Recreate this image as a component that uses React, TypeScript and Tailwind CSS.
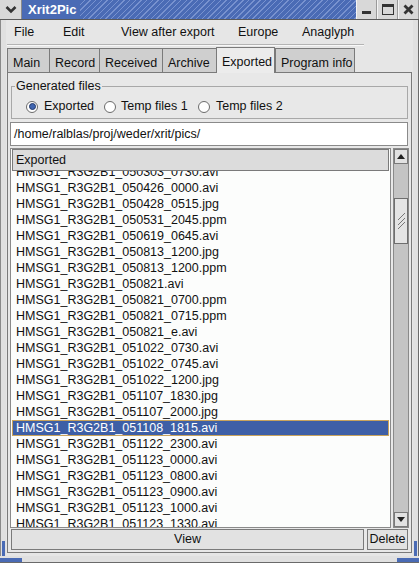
import React from "react";

const files = [
  "HMSG1_R3G2B1_050303_0730.avi",
  "HMSG1_R3G2B1_050426_0000.avi",
  "HMSG1_R3G2B1_050428_0515.jpg",
  "HMSG1_R3G2B1_050531_2045.ppm",
  "HMSG1_R3G2B1_050619_0645.avi",
  "HMSG1_R3G2B1_050813_1200.jpg",
  "HMSG1_R3G2B1_050813_1200.ppm",
  "HMSG1_R3G2B1_050821.avi",
  "HMSG1_R3G2B1_050821_0700.ppm",
  "HMSG1_R3G2B1_050821_0715.ppm",
  "HMSG1_R3G2B1_050821_e.avi",
  "HMSG1_R3G2B1_051022_0730.avi",
  "HMSG1_R3G2B1_051022_0745.avi",
  "HMSG1_R3G2B1_051022_1200.jpg",
  "HMSG1_R3G2B1_051107_1830.jpg",
  "HMSG1_R3G2B1_051107_2000.jpg",
  "HMSG1_R3G2B1_051108_1815.avi",
  "HMSG1_R3G2B1_051122_2300.avi",
  "HMSG1_R3G2B1_051123_0000.avi",
  "HMSG1_R3G2B1_051123_0800.avi",
  "HMSG1_R3G2B1_051123_0900.avi",
  "HMSG1_R3G2B1_051123_1000.avi",
  "HMSG1_R3G2B1_051123_1330.avi",
];
const SELECTED = 16;

const tabs = [
  { label: "Main", w: "w-[42px]" },
  { label: "Record", w: "w-[50px]" },
  { label: "Received", w: "w-[63px]" },
  { label: "Archive", w: "w-[54px]" },
  { label: "Exported", w: "w-[59px]", active: true },
  { label: "Program info", w: "w-[80px]" },
];

const Radio = ({ checked }: { checked?: boolean }) => (
  <span className="flex h-[12px] w-[12px] shrink-0 items-center justify-center rounded-full border border-[#6b6b6b] bg-white">
    {checked && <span className="h-[7px] w-[7px] rounded-full border border-[#22386b] bg-[#4065b0]" />}
  </span>
);

const TitleButton = ({ children }: { children: React.ReactNode }) => (
  <div className="flex h-full w-[21px] items-center justify-center border-l border-[#f4f4f4] border-r border-r-[#9a9a9a] bg-[#d8d8d8]">
    {children}
  </div>
);

export default function App() {
  return (
    <div className="flex h-[563px] w-[419px] flex-col overflow-hidden bg-[#e6e6e6] font-['Liberation_Sans',Arial,sans-serif] text-[12.5px] text-[#111]">
      {/* title bar */}
      <div className="flex h-[20px] shrink-0 items-stretch border-b border-[#5a5a5a]">
        <div className="flex w-[22px] items-center justify-center border-r border-[#8a8a8a] bg-[#d8d8d8]">
          <svg width="12" height="9" viewBox="0 0 12 9">
            <path d="M1.5 2 L6 6.5 L10.5 2" fill="none" stroke="#333" strokeWidth="2.6" />
          </svg>
        </div>
        <div className="flex flex-1 items-center bg-[#4a6bb5]">
          <span className="pl-[6px] pr-[4px] text-[13px] font-bold text-white">Xrit2Pic</span>
          <div className="h-full flex-1 bg-[repeating-linear-gradient(135deg,#4a6bb5_0px,#4a6bb5_3px,#7892cf_3px,#7892cf_4px)]" />
        </div>
        <TitleButton>
          <span className="mt-[6px] h-[3px] w-[9px] bg-[#333]" />
        </TitleButton>
        <TitleButton>
          <span className="h-[11px] w-[12px] border border-[#333] border-t-[3px]" />
        </TitleButton>
        <TitleButton>
          <svg width="11" height="11" viewBox="0 0 11 11">
            <path d="M1.5 1.5 L9.5 9.5 M9.5 1.5 L1.5 9.5" stroke="#333" strokeWidth="2.8" />
          </svg>
        </TitleButton>
      </div>

      <div className="flex min-h-0 flex-1">
        {/* left frame */}
        <div className="flex w-[6px] flex-col border-l border-[#8a8a8a] bg-[#e0e0e0]">
          <div className="flex-1" />
          <div className="ml-[1px] h-[15px] w-[3px] bg-[#4a6bb5]" />
        </div>

        {/* content */}
        <div className="flex min-h-0 flex-1 flex-col">
          {/* menu bar */}
          <div className="flex h-[24px] shrink-0 items-center pl-[8px]">
            <span className="w-[49px]">File</span>
            <span className="w-[58px]">Edit</span>
            <span className="w-[117px]">View after export</span>
            <span className="w-[64px]">Europe</span>
            <span>Anaglyph</span>
          </div>
          <div className="ml-[1px] h-[2px] w-[357px] shrink-0 border-t border-[#b4b4b4] border-b border-b-[#f8f8f8]" />

          {/* tabs */}
          <div className="ml-[1px] mt-[1px] flex h-[25px] shrink-0 items-end">
            {tabs.map((t, i) =>
              t.active ? (
                <div
                  key={t.label}
                  className={`relative z-10 -mb-[1px] flex h-[26px] ${t.w} items-start border-x border-t border-[#7a7a7a] bg-[#ececec] pl-[5px] pt-[5px]`}
                >
                  {t.label}
                </div>
              ) : (
                <div
                  key={t.label}
                  className={`flex h-[24px] ${t.w} items-start border-t border-l ${i === tabs.length - 1 ? "border-r" : ""} border-[#7a7a7a] bg-[#cfcfcf] pl-[5px] pt-[5px]`}
                >
                  {t.label}
                </div>
              )
            )}
          </div>

          {/* panel */}
          <div className="mx-[1px] mb-[3px] flex min-h-0 flex-1 flex-col border border-[#7a7a7a] bg-[#e8e8e8] pl-[2px] pr-[2px] pb-[2px] pt-[6px]">
            <fieldset className="mx-[1px] shrink-0 border border-[#a8a8a8] px-0 pb-0 pt-[2px]">
              <legend className="ml-[3px] px-[1px] leading-[14px]">Generated files</legend>
              <div className="flex h-[23px] items-center pl-[14px]">
                <label className="flex w-[78px] items-center gap-[6px]">
                  <Radio checked />
                  Exported
                </label>
                <label className="flex w-[94px] items-center gap-[5px]">
                  <Radio />
                  Temp files 1
                </label>
                <label className="flex items-center gap-[6px]">
                  <Radio />
                  Temp files 2
                </label>
              </div>
            </fieldset>

            <div className="mr-[1px] mt-[3px] flex h-[24px] shrink-0 items-center border border-[#8a8a8a] bg-white pl-[3px]">
              /home/ralblas/proj/weder/xrit/pics/
            </div>

            <div className="mt-[2px] flex min-h-0 flex-1 gap-[2px] overflow-hidden">
              {/* list */}
              <div className="flex min-h-0 flex-1 flex-col border border-[#8a8a8a] bg-[#fcfdfc]">
                <div className="mx-[1px] flex h-[22px] shrink-0 items-center border border-[#7a7a7a] bg-[#dcdcdc] pl-[3px]">
                  Exported
                </div>
                <div className="min-h-0 flex-1 overflow-hidden">
                  <div className="-mt-[7px] mx-[1px]">
                    {files.map((f, i) => (
                      <div
                        key={f}
                        className={`h-[16px] whitespace-nowrap border pl-[3px] leading-[14px] ${
                          i === SELECTED
                            ? "border-[#c8a35c] bg-[#3e5fa6] text-white"
                            : "border-transparent"
                        }`}
                      >
                        {f}
                      </div>
                    ))}
                  </div>
                </div>
              </div>

              {/* scrollbar */}
              <div className="flex w-[16px] flex-col border border-[#8a8a8a] bg-[#c4c4c4]">
                <div className="flex h-[15px] items-center justify-center border border-[#7a7a7a] bg-[#e2e2e2]">
                  <svg width="8" height="5" viewBox="0 0 8 5">
                    <path d="M0 5 L4 0 L8 5 Z" fill="#222" />
                  </svg>
                </div>
                <div className="h-[34px]" />
                <div className="flex h-[46px] items-center justify-center border border-[#6e6e6e] bg-[#e4e4e4]">
                  <svg width="9" height="16" viewBox="0 0 9 16">
                    <path d="M1 7 L8 0 M1 12 L8 5 M1 16 L8 9" stroke="#777" strokeWidth="1" />
                  </svg>
                </div>
                <div className="flex-1" />
                <div className="flex h-[15px] items-center justify-center border border-[#7a7a7a] bg-[#e2e2e2]">
                  <svg width="8" height="5" viewBox="0 0 8 5">
                    <path d="M0 0 L4 5 L8 0 Z" fill="#222" />
                  </svg>
                </div>
              </div>
            </div>

            <div className="mt-[1px] flex h-[21px] shrink-0 gap-[3px] pl-[1px] pr-[1px]">
              <button className="flex flex-1 items-center justify-center border border-[#7a7a7a] bg-[#e2e2e2]">
                View
              </button>
              <button className="flex w-[41px] items-center justify-center border border-[#7a7a7a] bg-[#e2e2e2]">
                Delete
              </button>
            </div>
          </div>
        </div>

        {/* right frame */}
        <div className="flex w-[6px] flex-col border-r border-[#6a6a6a] bg-[#e0e0e0]">
          <div className="flex-1" />
          <div className="ml-[1px] h-[15px] w-[3px] bg-[#4a6bb5]" />
        </div>
      </div>

      {/* bottom frame */}
      <div className="flex h-[7px] shrink-0 border-b border-[#6a6a6a] bg-[#e0e0e0]">
        <div className="mt-[2px] h-[4px] w-[22px] bg-[#4a6bb5]" />
        <div className="flex-1" />
        <div className="mt-[2px] h-[4px] w-[22px] bg-[#4a6bb5]" />
      </div>
    </div>
  );
}
